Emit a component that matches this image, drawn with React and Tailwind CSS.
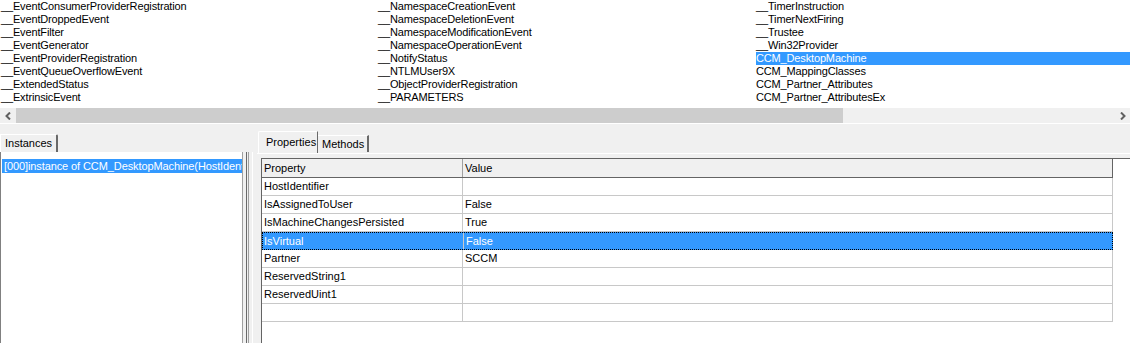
import React from 'react';

const col1 = [
  '__EventConsumerProviderRegistration',
  '__EventDroppedEvent',
  '__EventFilter',
  '__EventGenerator',
  '__EventProviderRegistration',
  '__EventQueueOverflowEvent',
  '__ExtendedStatus',
  '__ExtrinsicEvent',
];

const col2 = [
  '__NamespaceCreationEvent',
  '__NamespaceDeletionEvent',
  '__NamespaceModificationEvent',
  '__NamespaceOperationEvent',
  '__NotifyStatus',
  '__NTLMUser9X',
  '__ObjectProviderRegistration',
  '__PARAMETERS',
];

const col3 = [
  '__TimerInstruction',
  '__TimerNextFiring',
  '__Trustee',
  '__Win32Provider',
  'CCM_DesktopMachine',
  'CCM_MappingClasses',
  'CCM_Partner_Attributes',
  'CCM_Partner_AttributesEx',
];

const props = [
  ['HostIdentifier', ''],
  ['IsAssignedToUser', 'False'],
  ['IsMachineChangesPersisted', 'True'],
  ['IsVirtual', 'False'],
  ['Partner', 'SCCM'],
  ['ReservedString1', ''],
  ['ReservedUint1', ''],
  ['', ''],
];

const ClassColumn = ({ items, selected, width }) => (
  <div className={`flex flex-col ${width}`}>
    {items.map((name) => (
      <div
        key={name}
        className={`h-[13px] leading-[13px] whitespace-nowrap tracking-[-0.15px] ${
          name === selected ? 'bg-[#3399ff] text-white' : 'text-black'
        }`}
      >
        {name}
      </div>
    ))}
  </div>
);

const Arrow = ({ dir }) => (
  <svg width="7" height="8" viewBox="0 0 7 8">
    {dir === 'left' ? (
      <polyline points="5,0.5 1.5,4 5,7.5" fill="none" stroke="#606060" strokeWidth="2" />
    ) : (
      <polyline points="2,0.5 5.5,4 2,7.5" fill="none" stroke="#606060" strokeWidth="2" />
    )}
  </svg>
);

export default function App() {
  return (
    <div className="w-[1130px] h-[343px] overflow-hidden bg-[#f0f0f0] text-[11px] text-black font-['Liberation_Sans',Arial,sans-serif] flex flex-col">
      {/* class list */}
      <div className="h-[108px] bg-white flex pl-px">
        <ClassColumn items={col1} width="w-[377px]" />
        <ClassColumn items={col2} width="w-[378px]" />
        <ClassColumn items={col3} selected="CCM_DesktopMachine" width="flex-1" />
      </div>

      {/* horizontal scrollbar */}
      <div className="h-[15px] flex items-stretch bg-[#f0f0f0]">
        <div className="w-[16px] flex items-center justify-center">
          <Arrow dir="left" />
        </div>
        <div className="w-[827px] bg-[#cdcdcd]" />
        <div className="flex-1" />
        <div className="w-[16px] flex items-center justify-center">
          <Arrow dir="right" />
        </div>
      </div>
      <div className="h-[2px] border-t border-white" />

      {/* lower panes */}
      <div className="flex-1 flex min-h-0">
        {/* instances pane */}
        <div className="w-[243px] flex flex-col">
          <div className="h-[27px] flex items-end">
            <div className="h-[18px] w-[58px] pl-[4px] border-l border-t border-white border-r-2 border-r-[#696969] leading-[16px] rounded-tr-[2px]">
              Instances
            </div>
          </div>
          <div className="flex-1 bg-white border-l border-[#808080] border-r border-r-[#a0a0a0] pt-[7px] pl-px overflow-hidden">
            <div className="h-[14px] leading-[14px] bg-[#3399ff] text-white whitespace-nowrap overflow-hidden pl-[2px] tracking-[-0.1px]">
              [000]instance of CCM_DesktopMachine(HostIdentifier="")
            </div>
          </div>
        </div>

        {/* splitter */}
        <div className="w-[14px] flex pt-[27px]">
          <div className="w-[3px]" />
          <div className="w-px bg-[#696969]" />
          <div className="w-px bg-[#f0f0f0]" />
          <div className="w-px bg-[#a0a0a0]" />
          <div className="w-[3px]" />
          <div className="w-px bg-white" />
        </div>

        {/* properties pane */}
        <div className="flex-1 flex flex-col">
          <div className="h-[28px] flex items-end pl-px">
            <div className="h-[22px] w-[60px] pl-[7px] pt-[4px] border-l border-t border-white border-r border-r-[#696969] leading-[13px] rounded-tl-[2px]">
              Properties
            </div>
            <div className="h-[17px] w-[51px] pl-[4px] pt-[2px] border-t border-white border-r-2 border-r-[#696969] leading-[13px] mb-px">
              Methods
            </div>
          </div>
          <div className="flex-1 border-t border-white pt-[4px] pl-[4px] flex flex-col">
            <div className="flex-1 bg-white border-t border-l border-[#646464] flex flex-col">
              {/* header */}
              <div className="h-[19px] w-[851px] flex bg-[#f0f0f0] border-b border-r border-[#646464]">
                <div className="w-[201px] border-r border-[#a0a0a0] pl-[2px] leading-[18px]">Property</div>
                <div className="flex-1 pl-[2px] leading-[18px]">Value</div>
              </div>
              {props.map(([name, value], i) => {
                const sel = name === 'IsVirtual';
                return (
                  <div
                    key={i}
                    className={`h-[18px] w-[851px] flex ${
                      sel
                        ? 'bg-[#3399ff] text-white border border-dotted border-black'
                        : 'border-b border-r border-[#c8c8c8]'
                    }`}
                  >
                    <div
                      className={`w-[201px] leading-[16px] whitespace-nowrap border-r border-[#c8c8c8] ${
                        sel ? 'pl-[1px]' : 'pl-[2px]'
                      }`}
                    >
                      {name}
                    </div>
                    <div className="flex-1 pl-[2px] leading-[16px]">{value}</div>
                  </div>
                );
              })}
            </div>
          </div>
        </div>
      </div>
    </div>
  );
}
